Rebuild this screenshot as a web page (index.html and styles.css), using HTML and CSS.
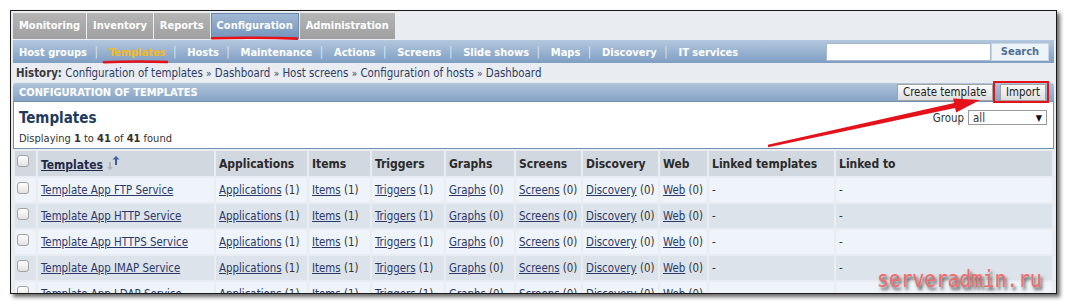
FILE: index.html
```html
<!DOCTYPE html>
<html lang="en">
<head>
    <meta charset="UTF-8">
    <meta name="viewport" content="width=device-width, initial-scale=1.0">
    <title>Configuration of templates</title>
    <link rel="stylesheet" href="styles.css">
</head>
<body>
    <div class="frame">
        <div class="tabs">
            <a class="tab">Monitoring</a>
            <a class="tab">Inventory</a>
            <a class="tab">Reports</a>
            <a class="tab active">Configuration</a>
            <a class="tab">Administration</a>
        </div>

        <div class="submenu">
            <div class="sub-links">
                <a>Host groups</a><span class="sep">|</span>
                <a class="current">Templates</a><span class="sep">|</span>
                <a>Hosts</a><span class="sep">|</span>
                <a>Maintenance</a><span class="sep">|</span>
                <a>Actions</a><span class="sep">|</span>
                <a>Screens</a><span class="sep">|</span>
                <a>Slide shows</a><span class="sep">|</span>
                <a>Maps</a><span class="sep">|</span>
                <a>Discovery</a><span class="sep">|</span>
                <a>IT services</a>
            </div>
            <form class="search">
                <input type="text" id="searchInput">
                <button type="button">Search</button>
            </form>
        </div>

        <div class="history">
            <b>History:</b>
            <a>Configuration of templates</a> <span class="raquo">&raquo;</span>
            <a>Dashboard</a> <span class="raquo">&raquo;</span>
            <a>Host screens</a> <span class="raquo">&raquo;</span>
            <a>Configuration of hosts</a> <span class="raquo">&raquo;</span>
            <a>Dashboard</a>
        </div>

        <div class="header-bar">
            <span>Configuration of templates</span>
            <div class="actions">
                <button type="button">Create template</button>
                <button type="button">Import</button>
            </div>
        </div>

        <div class="list-box">
            <div class="list-head">
                <h2>Templates</h2>
                <div class="group-filter">
                    <span>Group</span>
                    <div class="select"><span>all</span><span class="caret">&#9660;</span></div>
                </div>
            </div>
            <div class="list-count">Displaying <b>1</b> to <b>41</b> of <b>41</b> found</div>
        </div>

        <table class="grid">
            <colgroup>
                <col class="c-cb"><col class="c-name"><col class="c-apps"><col class="c-items">
                <col class="c-trig"><col class="c-graphs"><col class="c-screens"><col class="c-disc">
                <col class="c-web"><col class="c-linked"><col class="c-to">
            </colgroup>
            <thead>
                <tr>
                    <th class="cb"><span class="check"></span></th>
                    <th><a class="sort">Templates</a><svg class="sort-icon" width="15" height="15" viewBox="0 0 15 15"><path d="M3 6v5H1l3 3.5L7 11H5V6z" fill="#b5b5b5"/><path d="M11 9V3.5h2.5L10 0 6.5 3.5H9V9z" fill="#3d5f9e"/></svg></th>
                    <th>Applications</th>
                    <th>Items</th>
                    <th>Triggers</th>
                    <th>Graphs</th>
                    <th>Screens</th>
                    <th>Discovery</th>
                    <th>Web</th>
                    <th>Linked templates</th>
                    <th>Linked to</th>
                </tr>
            </thead>
            <tbody id="templateRows"></tbody>
        </table>
    </div>

    <svg class="marks" width="1069" height="305" viewBox="0 0 1069 305">
        <path d="M212 38.2 Q254 37.2 297 38.6" stroke="#e3121b" stroke-width="2.6" fill="none" stroke-linecap="round"/>
        <path d="M104 62.2 Q136 61 167 62" stroke="#e3121b" stroke-width="2.6" fill="none" stroke-linecap="round"/>
        <rect x="994" y="82" width="54" height="20" stroke="#e3121b" stroke-width="2" fill="none"/>
        <polygon points="767.8,144.8 954.1,103.1 953.1,98.4 980,100 956.1,112.5 955.1,107.9 768.3,147.2" fill="#e3121b"/>
    </svg>
    <div class="watermark">serveradmin.ru</div>

    <script>
        const templates = ['FTP', 'HTTP', 'HTTPS', 'IMAP', 'LDAP'];
        const rows = document.getElementById('templateRows');

        templates.forEach((name, i) => {
            const tr = document.createElement('tr');
            tr.className = i % 2 === 0 ? 'odd' : 'even';
            tr.innerHTML = `
                <td class="cb"><span class="check"></span></td>
                <td><a>Template App ${name} Service</a></td>
                <td><a>Applications</a> (1)</td>
                <td><a>Items</a> (1)</td>
                <td><a>Triggers</a> (1)</td>
                <td><a>Graphs</a> (0)</td>
                <td><a>Screens</a> (0)</td>
                <td><a>Discovery</a> (0)</td>
                <td><a>Web</a> (0)</td>
                <td>-</td>
                <td>-</td>`;
            rows.appendChild(tr);
        });
    </script>
</body>
</html>
```

FILE: styles.css
```css
body {
    margin: 0;
    background-color: #fff;
    font-family: "DejaVu Sans Condensed", "Liberation Sans", sans-serif;
    font-size: 11.4px;
    color: #333;
    position: relative;
    height: 305px;
    overflow: hidden;
}

.frame {
    margin: 10px 0 0 10px;
    width: 1047px;
    height: 284px;
    box-sizing: border-box;
    border: 1px solid #1a1a1a;
    background-color: #e9ecf0;
    padding: 2px 2px 0;
    overflow: hidden;
    box-shadow: 3px 3px 4px rgba(0, 0, 0, 0.6);
}

/* top tabs */
.tabs {
    display: flex;
    gap: 1px;
    height: 26px;
    margin-bottom: 1px;
}

.tab {
    padding: 0 6px;
    line-height: 26px;
    font-size: 11px;
    font-weight: bold;
    color: #fff;
    background: linear-gradient(#b5b5b5, #9f9f9f);
}

.tab.active {
    background: linear-gradient(#a2bad5, #7293ba);
    box-shadow: inset 0 0 0 1px #6a8ab0;
}

/* sub menu */
.submenu {
    display: flex;
    align-items: center;
    justify-content: space-between;
    height: 23px;
    padding: 0 5px 0 6px;
    background: linear-gradient(#b3c8de, #7e9ec3);
}

.sub-links a {
    color: #fff;
    font-size: 11px;
    font-weight: bold;
}

.sub-links .current {
    color: #f6b91f;
}

.sep {
    color: #dce5ef;
    margin: 0 7.5px;
}

.search {
    display: flex;
    margin: 0;
}

.search input {
    width: 165px;
    height: 18px;
    box-sizing: border-box;
    border: 1px solid #a5b8cc;
    padding: 0 3px;
    margin: 0;
}

.search button {
    width: 58px;
    height: 18px;
    border: 1px solid #c8d5e3;
    background-color: #eef3f8;
    color: #4d7099;
    font: bold 11px "DejaVu Sans Condensed", "Liberation Sans", sans-serif;
    padding: 0;
}

/* history line */
.history {
    height: 19px;
    line-height: 18px;
    padding-left: 3px;
    margin-top: 1px;
    color: #2d3c66;
}

.history b {
    color: #3b3b3b;
}

.raquo {
    font-size: 10px;
}

/* title bar */
.header-bar {
    display: flex;
    align-items: center;
    justify-content: space-between;
    height: 18px;
    padding: 0 8px 0 6px;
    background: linear-gradient(#afc4da, #86a3c5);
    color: #fff;
    font-size: 11px;
    font-weight: bold;
    text-transform: uppercase;
    border-radius: 3px 3px 0 0;
}

.actions button {
    height: 17px;
    margin-left: 4px;
    padding: 0 5px;
    border: 1px solid #a3a3a3;
    background: linear-gradient(#fbfbfb, #dedede);
    color: #222;
    font: 11.4px "DejaVu Sans Condensed", "Liberation Sans", sans-serif;
}

/* list header box */
.list-box {
    height: 48px;
    box-sizing: border-box;
    border: 1px solid #7591b2;
    background-color: #fff;
    padding: 2px 6px 0 5px;
}

.list-head {
    display: flex;
    align-items: center;
    justify-content: space-between;
    height: 27px;
}

.list-head h2 {
    margin: 0;
    font-size: 15px;
    color: #22395c;
}

.group-filter {
    display: flex;
    align-items: center;
    gap: 4px;
    color: #333;
}

.select {
    display: flex;
    justify-content: space-between;
    align-items: center;
    width: 79px;
    height: 15px;
    box-sizing: border-box;
    border: 1px solid #9a9a9a;
    padding: 0 4px;
}

.caret {
    font-size: 9px;
    color: #111;
}

.list-count {
    font-size: 11px;
    line-height: 14px;
    margin-top: 1px;
}

/* table */
.grid {
    border-spacing: 2px;
    width: 1041px;
    table-layout: fixed;
}

.c-cb { width: 21px; }
.c-name { width: 176px; }
.c-apps { width: 91px; }
.c-items { width: 61px; }
.c-trig { width: 72px; }
.c-graphs { width: 68px; }
.c-screens { width: 65px; }
.c-disc { width: 75px; }
.c-web { width: 47px; }
.c-linked { width: 125px; }
.c-to { width: 216px; }

.grid th {
    height: 25px;
    padding: 0 3px;
    background-color: #d2d8e0;
    text-align: left;
    font-size: 12px;
    color: #2a2a2a;
    white-space: nowrap;
}

.grid td {
    height: 24px;
    padding: 0 3px;
    white-space: nowrap;
    overflow: hidden;
}

.grid a {
    color: #2b396a;
    text-decoration: underline;
}

.grid th a.sort {
    color: #1f2a48;
}

.sort-icon {
    margin-left: 3px;
    vertical-align: -2px;
}

tr.odd td {
    background-color: #eef4f9;
}

tr.even td {
    background-color: #dde3ea;
}

.grid .cb {
    padding: 0 0 0 2px;
    vertical-align: top;
}

.check {
    display: inline-block;
    width: 12px;
    height: 12px;
    margin-top: 4px;
    box-sizing: border-box;
    border: 1px solid #a2a2a2;
    border-radius: 3px;
    background: linear-gradient(#fff, #e2e2e2);
}

/* overlays on the screenshot */
.marks {
    position: absolute;
    top: 0;
    left: 0;
    pointer-events: none;
}

.watermark {
    position: absolute;
    left: 877px;
    top: 265px;
    font-family: "DejaVu Sans Mono", monospace;
    font-size: 20px;
    letter-spacing: -0.3px;
    color: #f06c6c;
    text-shadow: 2px 2px 3px rgba(0, 0, 0, 0.7);
    transform: scaleY(1.18);
    transform-origin: top left;
}
```
